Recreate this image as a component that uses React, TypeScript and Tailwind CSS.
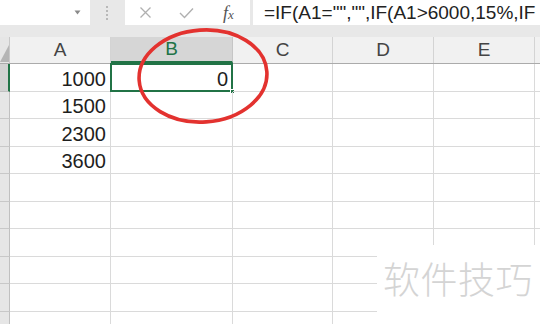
import React from 'react';

const cols = [
    { key: 'A', width: 'w-[101px]' },
    { key: 'B', width: 'w-[122px]' },
    { key: 'C', width: 'w-[100px]' },
    { key: 'D', width: 'w-[101px]' },
    { key: 'E', width: 'w-[101px]' },
];

const values: Record<number, string> = { 1: '1000', 2: '1500', 3: '2300', 4: '3600' };
const rows = [1, 2, 3, 4, 5, 6, 7, 8, 9, 10];

function FormulaBar() {
    return (
        <div className="h-[37px] bg-[#e8e8e8] flex items-start">
            <div className="w-[90px] h-[25px] bg-white flex items-center justify-end pr-[9px]">
                <svg width="7" height="5" viewBox="0 0 7 5">
                    <path d="M0.5 0.5 L6.5 0.5 L3.5 4.5 Z" fill="#8a8a8a" />
                </svg>
            </div>
            <div className="w-[35px] h-[25px] flex flex-col items-center justify-center gap-[2px] pr-[1px]">
                <div className="w-[2px] h-[2px] bg-[#b8b8b8]" />
                <div className="w-[2px] h-[2px] bg-[#b8b8b8]" />
                <div className="w-[2px] h-[2px] bg-[#b8b8b8]" />
                <div className="w-[2px] h-[2px] bg-[#b8b8b8]" />
            </div>
            <div className="w-[125px] h-[25px] bg-white flex items-center">
                <div className="w-[40px] flex justify-center">
                    <svg width="13" height="13" viewBox="0 0 13 13">
                        <path d="M1.5 1.5 L11.5 11.5 M11.5 1.5 L1.5 11.5" stroke="#b0b0b0" strokeWidth="1.3" />
                    </svg>
                </div>
                <div className="w-[42px] flex justify-center">
                    <svg width="15" height="12" viewBox="0 0 15 12">
                        <path d="M1 6 L5.5 10.5 L14 1.5" stroke="#b0b0b0" strokeWidth="1.4" fill="none" />
                    </svg>
                </div>
                <div className="w-[43px] flex justify-center">
                    <span className="font-['Liberation_Serif',serif] italic text-[18px] text-[#555555] leading-none">
                        f<span className="text-[13px]">x</span>
                    </span>
                </div>
            </div>
            <div className="ml-[3px] flex-1 h-[25px] bg-white flex items-center pl-[11px] overflow-hidden whitespace-nowrap text-[19px] text-[#222222] leading-none">
                =IF(A1="","",IF(A1&gt;6000,15%,IF
            </div>
        </div>
    );
}

function HeaderRow() {
    return (
        <div className="h-[27px] flex border-b border-[#ababab] bg-[#f1f1f1]">
            <div className="w-[10px] shrink-0 bg-[#e6e6e6] border-r border-[#c8c8c8] flex items-end justify-end">
                <svg width="9" height="20" viewBox="0 0 9 20">
                    <path d="M9 2 L9 19 L0 19 Z" fill="#b5b5b5" />
                </svg>
            </div>
            {cols.map((c) => (
                <div
                    key={c.key}
                    className={
                        c.key === 'B'
                            ? `${c.width} shrink-0 bg-[#d6d6d6] border-r border-[#c6c6c6] border-b-2 border-b-[#217346] text-[#217346] flex items-center justify-center text-[19px]`
                            : `${c.width} shrink-0 border-r border-[#d4d4d4] text-[#444444] flex items-center justify-center text-[19px]`
                    }
                >
                    {c.key}
                </div>
            ))}
            <div className="flex-1" />
        </div>
    );
}

function SheetRow({ n }: { n: number }) {
    const selected = n === 1;
    return (
        <div className="h-[27.5px] flex">
            <div
                className={
                    selected
                        ? 'w-[10px] shrink-0 bg-[#d2d2d2] border-r-2 border-[#217346] border-b border-b-[#c0c0c0]'
                        : 'w-[10px] shrink-0 bg-[#e6e6e6] border-r border-[#c0c0c0] border-b border-b-[#c8c8c8]'
                }
            />
            {cols.map((c) => (
                <div
                    key={c.key}
                    className={`${c.width} shrink-0 border-r border-b border-[#dadada] relative flex items-end justify-end pr-[4px] pb-[2px] text-[20px] leading-none text-[#1e1e1e]`}
                >
                    {c.key === 'A' ? values[n] : null}
                    {c.key === 'B' && selected ? (
                        <>
                            <span className="relative z-10">0</span>
                            <div className="absolute -left-[1px] -top-[1px] -right-[1px] -bottom-[1px] border-2 border-[#217346]" />
                            <div className="absolute -right-[3px] -bottom-[3px] w-[5px] h-[5px] bg-[#217346] border border-white" />
                        </>
                    ) : null}
                </div>
            ))}
            <div className="flex-1 border-b border-[#dadada]" />
        </div>
    );
}

export default function App() {
    return (
        <div className="w-[540px] h-[324px] overflow-hidden bg-white relative font-['Liberation_Sans',sans-serif]">
            <FormulaBar />
            <HeaderRow />
            {rows.map((n) => (
                <SheetRow key={n} n={n} />
            ))}
            <svg className="absolute left-0 top-0 pointer-events-none" width="540" height="324">
                <ellipse
                    cx="203"
                    cy="76"
                    rx="64"
                    ry="46"
                    fill="none"
                    stroke="#e3322f"
                    strokeWidth="3.6"
                    transform="rotate(-4 203 76)"
                />
            </svg>
            <div className="absolute left-[377px] top-[245px] w-[163px] h-[79px] bg-white flex items-start pl-[6px] pt-[15px]">
                <span className="font-['Noto_Sans_CJK_SC',sans-serif] font-light text-[37px] leading-none text-[#d4d4d4] tracking-[0.5px]">
                    软件技巧
                </span>
            </div>
        </div>
    );
}
